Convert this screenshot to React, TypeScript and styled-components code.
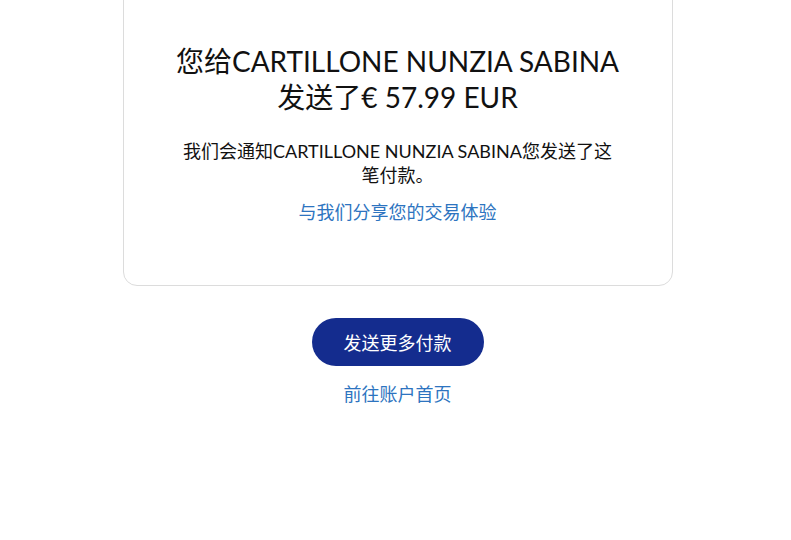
import React from 'react';
import styled, { createGlobalStyle } from 'styled-components';

const GlobalStyle = createGlobalStyle`
  html, body {
    margin: 0;
    padding: 0;
    background: #ffffff;
  }
  body {
    font-family: Lato, "Noto Sans CJK SC", sans-serif;
    color: #111111;
  }
`;

const Page = styled.main`
  box-sizing: border-box;
  display: flex;
  flex-direction: column;
  align-items: center;
  width: 791px;
  padding-left: 4px;
`;

const Card = styled.section`
  box-sizing: border-box;
  width: 550px;
  margin-top: -40px;
  padding: 82px 50px 61px;
  border: 1px solid #dcdcdc;
  border-radius: 14px;
  display: flex;
  flex-direction: column;
  align-items: center;
  text-align: center;
`;

const Title = styled.h1`
  margin: 0;
  font-size: 28px;
  line-height: 36px;
  font-weight: 400;
  color: #111111;
`;

const Message = styled.p`
  margin: 24px 0 0;
  max-width: 440px;
  font-size: 18px;
  line-height: 24px;
  color: #111111;
`;

const TextLink = styled.a<{ $top: number }>`
  display: block;
  margin-top: ${p => p.$top}px;
  font-size: 18px;
  line-height: 24px;
  color: #2d74c0;
  text-decoration: none;
  cursor: pointer;
`;

const Actions = styled.div`
  display: flex;
  flex-direction: column;
  align-items: center;
  margin-top: 32px;
`;

const PrimaryButton = styled.button`
  width: 172px;
  height: 48px;
  border: none;
  border-radius: 24px;
  background: #142c8e;
  color: #ffffff;
  font-family: Lato, "Noto Sans CJK SC", sans-serif;
  font-size: 18px;
  cursor: pointer;
`;

const App: React.FC = () => {
    return (
        <>
            <GlobalStyle />
            <Page>
                <Card>
                    <Title>您给CARTILLONE NUNZIA SABINA发送了€ 57.99 EUR</Title>
                    <Message>我们会通知CARTILLONE NUNZIA SABINA您发送了这笔付款。</Message>
                    <TextLink $top={13}>与我们分享您的交易体验</TextLink>
                </Card>
                <Actions>
                    <PrimaryButton>发送更多付款</PrimaryButton>
                    <TextLink $top={16}>前往账户首页</TextLink>
                </Actions>
            </Page>
        </>
    );
};

export default App;
